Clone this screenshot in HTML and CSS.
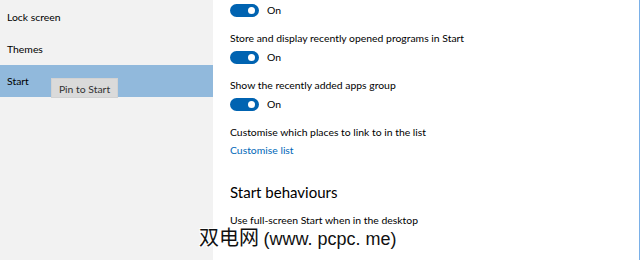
FILE: index.html
```html
<!DOCTYPE html>
<html lang="en">
<head>
    <meta charset="UTF-8">
    <title>Settings - Start</title>
    <link rel="stylesheet" href="styles.css">
</head>
<body>
    <div class="window">
        <aside class="sidebar">
            <div class="nav-item">Lock screen</div>
            <div class="nav-item">Themes</div>
            <div class="nav-item active">
                Start
                <div class="tooltip">Pin to Start</div>
            </div>
        </aside>
        <main class="content">
            <div class="toggle-row first">
                <span class="toggle"><span class="knob"></span></span>
                <span class="state">On</span>
            </div>
            <div class="label">Store and display recently opened programs in Start</div>
            <div class="toggle-row">
                <span class="toggle"><span class="knob"></span></span>
                <span class="state">On</span>
            </div>
            <div class="label">Show the recently added apps group</div>
            <div class="toggle-row">
                <span class="toggle"><span class="knob"></span></span>
                <span class="state">On</span>
            </div>
            <div class="label">Customise which places to link to in the list</div>
            <a class="link" href="#">Customise list</a>
            <h2 class="heading">Start behaviours</h2>
            <div class="label tight">Use full-screen Start when in the desktop</div>
        </main>
    </div>
    <div class="watermark">双电网 <span class="site">(www. pcpc. me)</span></div>
</body>
</html>
```

FILE: styles.css
```css
body {
    margin: 0;
    padding: 0;
    font-family: Lato, "Noto Sans", sans-serif;
    font-size: 10.4px;
    color: #000;
    background: #fff;
    overflow: hidden;
}
.window {
    display: flex;
    width: 640px;
    height: 260px;
}
.sidebar {
    width: 213px;
    flex: none;
    background: #f2f2f2;
    padding-top: 1px;
}
.nav-item {
    position: relative;
    height: 32px;
    line-height: 32px;
    padding-left: 7px;
    color: #000;
}
.nav-item.active {
    background: #91b9dc;
}
.tooltip {
    position: absolute;
    left: 51px;
    top: 13px;
    width: 67px;
    height: 20px;
    line-height: 20px;
    box-sizing: border-box;
    background: #dadada;
    border: 1px solid #d2d2d2;
    color: #333;
    text-align: center;
}
.content {
    flex: 1;
    display: flex;
    flex-direction: column;
    align-items: flex-start;
    padding-left: 17px;
    border-right: 1px solid #7ab0e8;
}
.toggle-row {
    display: flex;
    align-items: center;
    height: 13px;
    margin-top: 5px;
}
.toggle-row.first {
    margin-top: 4px;
}
.toggle {
    display: flex;
    align-items: center;
    justify-content: flex-end;
    width: 29px;
    height: 13px;
    box-sizing: border-box;
    padding-right: 4px;
    border-radius: 7px;
    background: #0063b1;
}
.knob {
    width: 7px;
    height: 7px;
    border-radius: 50%;
    background: #fff;
}
.state {
    margin-left: 8px;
    line-height: 13px;
}
.label {
    line-height: 16px;
    margin-top: 13px;
}
.label.tight {
    margin-top: 8px;
}
.link {
    margin-top: 2px;
    line-height: 16px;
    color: #0067b8;
    text-decoration: none;
}
.heading {
    margin: 22px 0 0;
    font-size: 15px;
    font-weight: normal;
    line-height: 24px;
}
.watermark {
    position: absolute;
    left: 199px;
    top: 224px;
    font-family: "Noto Sans CJK SC", "DejaVu Sans", sans-serif;
    font-size: 20px;
    line-height: 26px;
    color: #111;
    text-shadow: 1px 1px 0 #fff, -1px -1px 0 #fff, 1px -1px 0 #fff, -1px 1px 0 #fff;
}
.site {
    font-family: "Liberation Sans", sans-serif;
    font-size: 18px;
}
```
